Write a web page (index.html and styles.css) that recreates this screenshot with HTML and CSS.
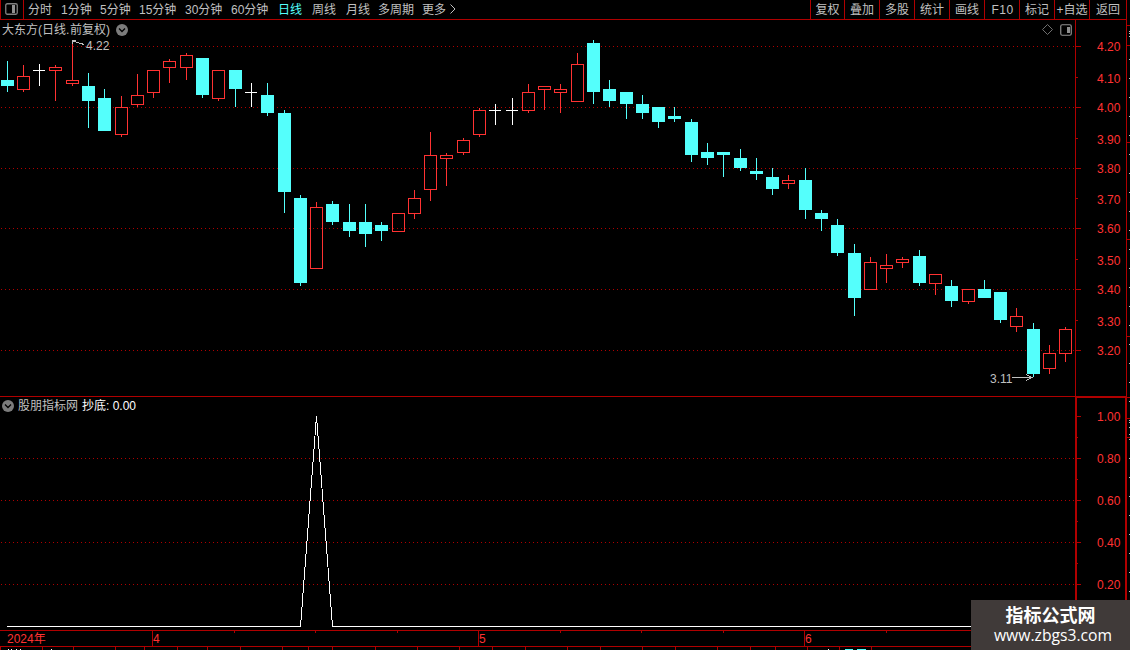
FILE: index.html
```html
<!DOCTYPE html>
<html lang="zh-CN">
  <head>
    <meta charset="UTF-8" />
    <meta name="viewport" content="width=device-width, initial-scale=1.0" />
    <title>大东方 日线</title>
    <link rel="stylesheet" href="styles.css">
  </head>
  <body>
    <nav id="toolbar">
      <div class="layout-btn">
        <svg width="13" height="12" viewBox="0 0 13 12">
          <rect x="0.75" y="0.75" width="11.5" height="10.5" rx="1.5" fill="none" stroke="#808080" stroke-width="1.3" />
          <rect x="7" y="2" width="3" height="8" fill="#909090" />
        </svg>
      </div>
      <div class="periods">
        <span>分时</span>
        <span>1分钟</span>
        <span>5分钟</span>
        <span>15分钟</span>
        <span>30分钟</span>
        <span>60分钟</span>
        <span class="active">日线</span>
        <span>周线</span>
        <span>月线</span>
        <span>多周期</span>
        <span>更多</span>
        <svg width="6" height="10" viewBox="0 0 6 10">
          <path d="M0.5 0.5 L5 5 L0.5 9.5" fill="none" stroke="#c0c0c0" />
        </svg>
      </div>
      <div class="tools">
        <span>复权</span>
        <span>叠加</span>
        <span>多股</span>
        <span>统计</span>
        <span>画线</span>
        <span class="wide">F10</span>
        <span>标记</span>
        <span>+自选</span>
        <span>返回</span>
      </div>
    </nav>

    <main>
      <div class="charts">
        <section class="panel price">
          <svg id="price" width="1127" height="376" viewBox="0 20 1127 376" shape-rendering="crispEdges"></svg>
          <header>
            <span>大东方<i>(</i>日线<i>.</i>前复权<i>)</i></span>
            <svg width="12" height="12" viewBox="0 0 12 12">
              <circle cx="6" cy="6" r="6" fill="#7c7c7c" />
              <path d="M3 4.5 L6 7.5 L9 4.5" fill="none" stroke="#000" stroke-width="1.3" />
            </svg>
          </header>
          <div class="corner">
            <svg width="11" height="11" viewBox="0 0 11 11">
              <path d="M5.5 0.5 L10.5 5.5 L5.5 10.5 L0.5 5.5 Z" fill="none" stroke="#707070" />
            </svg>
            <svg width="12" height="12" viewBox="0 0 12 12">
              <rect x="0.75" y="0.75" width="10.5" height="10.5" rx="1.5" fill="none" stroke="#909090" stroke-width="1.2" />
              <rect x="7" y="3" width="3" height="6" fill="#909090" />
            </svg>
          </div>
        </section>

        <section class="panel signal">
          <svg id="signal" width="1127" height="234" viewBox="0 396 1127 234" shape-rendering="crispEdges"></svg>
          <header>
            <svg width="12" height="12" viewBox="0 0 12 12">
              <circle cx="6" cy="6" r="6" fill="#7c7c7c" />
              <path d="M3 4.5 L6 7.5 L9 4.5" fill="none" stroke="#000" stroke-width="1.3" />
            </svg>
            <span>股朋指标网</span>
            <span class="value">抄底: 0.00</span>
          </header>
        </section>

        <svg id="timeline" width="1127" height="20" viewBox="0 630 1127 20" shape-rendering="crispEdges"></svg>
      </div>
      <svg id="strip" width="3" height="630" viewBox="1127 20 3 630" shape-rendering="crispEdges"></svg>
    </main>

    <div class="watermark">
      <strong>指标公式网</strong>
      <span>www.zbgs3.com</span>
    </div>

    <script src="chart.js"></script>
  </body>
</html>
```
FILE: styles.css
```css
* {
  margin: 0;
  padding: 0;
  box-sizing: border-box;
}

body {
  width: 1130px;
  height: 650px;
  overflow: hidden;
  position: relative;
  background: #000;
  color: #c0c0c0;
  font-family: "Liberation Sans", "Noto Sans CJK SC", sans-serif;
  font-size: 12px;
  line-height: 18px;
}

svg {
  display: block;
}

#toolbar {
  display: flex;
  height: 20px;
  width: 1127px;
  border-bottom: 1px solid #b00000;
  border-right: 1px solid #b00000;
  line-height: 20px;
  white-space: nowrap;
}

.layout-btn {
  width: 24px;
  padding: 3px 0 0 4px;
  border-left: 1px solid #b00000;
  border-right: 1px solid #b00000;
}

.periods {
  flex: 1;
  display: grid;
  grid-template-columns: 33px 39px 39px 46px 46px 47px 34px 34px 32px 44px 28px 8px;
  padding-left: 4px;
}

.periods svg {
  margin-top: 4px;
}

.active {
  color: #54fffc;
}

.tools {
  display: grid;
  grid-template-columns: 34px repeat(7, 35px) 37px;
}

.tools span {
  border-left: 1px solid #b00000;
  text-align: center;
}

.tools .wide {
  letter-spacing: 0.5px;
  padding-left: 1px;
}

main {
  display: flex;
}

.panel {
  position: relative;
}

.panel header {
  position: absolute;
  top: 0;
  left: 2px;
  display: flex;
  align-items: center;
  gap: 6px;
}

.panel header span {
  padding-top: 1px;
}

.panel header i {
  display: inline-block;
  width: 4px;
  font-style: normal;
}

.panel.signal header {
  gap: 4px;
}

.value {
  color: #fff;
}

.corner {
  position: absolute;
  top: 4px;
  left: 1042px;
  display: flex;
  gap: 7px;
}

/* axis and candle drawing */
.rule {
  fill: #b00000;
}

.dots {
  stroke: #b00000;
  stroke-dasharray: 1 3;
}

.up {
  fill: #ff3232;
}

.down {
  fill: #54fffc;
}

.flat {
  fill: #fff;
}

.hollow {
  fill: none;
  stroke: #ff3232;
}

.axis-text {
  fill: #ff3232;
  font-size: 12px;
}

.note {
  fill: #c0c0c0;
  font-size: 12px;
}

.arrow {
  fill: none;
  stroke: #c0c0c0;
}

.line {
  fill: none;
  stroke: #fff;
}

.watermark {
  position: absolute;
  right: 0;
  bottom: 0;
  width: 159px;
  height: 50px;
  padding-top: 6px;
  display: flex;
  flex-direction: column;
  align-items: center;
  background: #403a39;
  color: #fff;
}

.watermark strong {
  font: bold 18px/20px "Liberation Sans", "Noto Sans CJK SC", sans-serif;
}

.watermark span {
  font: 15.7px/19px "Open Sans", sans-serif;
  margin-left: 5px;
}
```
FILE: chart.js
```js
// x, high, body top, body bottom, low, kind (u = up, d = down, f = flat)
const candles = [
  [7, 61, 80, 86, 92, "d"],
  [23, 65, 76, 90, 92, "u"],
  [39, 64, 70, 71, 86, "f"],
  [55, 65, 67, 71, 101, "u"],
  [72, 43, 80, 84, 86, "u"],
  [88, 73, 86, 101, 128, "d"],
  [104, 89, 98, 131, 131, "d"],
  [121, 96, 107, 135, 137, "u"],
  [137, 74, 95, 105, 107, "u"],
  [153, 70, 70, 93, 98, "u"],
  [169, 59, 61, 68, 83, "u"],
  [186, 53, 55, 68, 80, "u"],
  [202, 58, 58, 95, 98, "d"],
  [218, 70, 70, 99, 101, "u"],
  [235, 70, 70, 89, 107, "d"],
  [251, 83, 92, 93, 107, "f"],
  [267, 83, 95, 113, 116, "d"],
  [284, 110, 113, 192, 213, "d"],
  [300, 195, 198, 283, 286, "d"],
  [316, 202, 207, 269, 269, "u"],
  [332, 201, 204, 222, 225, "d"],
  [349, 204, 222, 231, 237, "d"],
  [365, 204, 222, 234, 247, "d"],
  [381, 222, 225, 231, 241, "d"],
  [398, 213, 213, 232, 232, "u"],
  [414, 190, 198, 214, 219, "u"],
  [430, 132, 155, 190, 201, "u"],
  [446, 153, 155, 159, 186, "u"],
  [463, 138, 140, 153, 155, "u"],
  [479, 108, 110, 135, 137, "u"],
  [495, 104, 110, 111, 125, "f"],
  [512, 98, 110, 111, 125, "f"],
  [528, 84, 92, 111, 113, "u"],
  [544, 86, 86, 90, 110, "u"],
  [560, 84, 89, 93, 113, "u"],
  [577, 53, 64, 102, 102, "u"],
  [593, 40, 43, 92, 104, "d"],
  [609, 80, 89, 101, 107, "d"],
  [626, 92, 92, 104, 119, "d"],
  [642, 95, 104, 113, 119, "d"],
  [658, 107, 107, 122, 128, "d"],
  [674, 107, 116, 119, 122, "d"],
  [691, 119, 122, 155, 162, "d"],
  [707, 143, 152, 158, 165, "d"],
  [723, 152, 152, 155, 177, "d"],
  [740, 149, 158, 168, 171, "d"],
  [756, 158, 171, 174, 180, "d"],
  [772, 168, 177, 189, 195, "d"],
  [788, 175, 180, 184, 189, "u"],
  [805, 168, 180, 210, 219, "d"],
  [821, 210, 213, 219, 231, "d"],
  [837, 219, 225, 253, 256, "d"],
  [854, 244, 253, 298, 316, "d"],
  [870, 257, 262, 290, 290, "u"],
  [886, 254, 265, 269, 283, "u"],
  [902, 257, 259, 263, 268, "u"],
  [919, 250, 256, 283, 286, "d"],
  [935, 274, 274, 284, 295, "u"],
  [951, 280, 286, 301, 307, "d"],
  [968, 289, 289, 302, 304, "u"],
  [984, 280, 289, 298, 298, "d"],
  [1000, 292, 292, 320, 323, "d"],
  [1016, 308, 316, 327, 332, "u"],
  [1033, 323, 329, 374, 377, "d"],
  [1049, 345, 353, 369, 374, "u"],
  [1065, 327, 329, 354, 362, "u"],
];

const classes = { u: "up", d: "down", f: "flat" };

const rect = (x, y, w, h, cls) =>
  `<rect x="${x}" y="${y}" width="${w}" height="${h}" class="${cls}"/>`;
const text = (x, y, str, cls) =>
  `<text x="${x}" y="${y}" class="${cls}">${str}</text>`;
const dots = (y) =>
  `<line x1="1" y1="${y + 0.5}" x2="1075" y2="${y + 0.5}" class="dots"/>`;

function drawCandle([x, high, top, bottom, low, kind]) {
  const cls = classes[kind];
  let out = "";
  if (top > high) out += rect(x, high, 1, top - high, cls);
  if (low > bottom) out += rect(x, bottom, 1, low - bottom, cls);
  if (kind === "u") {
    out += `<rect x="${x - 5.5}" y="${top + 0.5}" width="12" height="${bottom - top - 1}" class="hollow"/>`;
  } else if (kind === "f") {
    out += rect(x - 6, top, 12, 1, cls);
  } else {
    out += rect(x - 6, top, 13, bottom - top, cls);
  }
  return out;
}

function drawPrice() {
  let out = "";
  const labels = [
    ["4.20", 46, 46], ["4.10", 77, 78], ["4.00", 107, 107], ["3.90", 138, 139],
    ["3.80", 168, 168], ["3.70", 198, 199], ["3.60", 228, 228], ["3.50", 259, 260],
    ["3.40", 289, 289], ["3.30", 320, 321], ["3.20", 350, 350],
  ];
  labels.forEach(([label, y, ty], i) => {
    const major = i % 2 === 0;
    if (major) out += dots(y);
    out += rect(1076, y, major ? 5 : 2, 1, "rule");
    out += text(1097, ty + 5, label, "axis-text");
  });
  out += rect(1075, 20, 1, 376, "rule") + rect(1126, 20, 1, 376, "rule");
  out += candles.map(drawCandle).join("");

  out += text(86, 50, "4.22", "note");
  out += `<path d="M84 44.5 L73 41 M72.5 44 V40.5 M72 40.5 H76" class="arrow"/>`;
  out += text(990, 383, "3.11", "note");
  out += `<path d="M1012 377.5 H1032 M1026 374.5 L1032 377.5 L1026 380.5" class="arrow"/>`;
  document.getElementById("price").innerHTML = out;
}

function drawSignal() {
  let out = rect(0, 396, 1127, 1, "rule") + rect(1075, 397, 52, 1, "rule");
  out += rect(1075, 396, 2, 234, "rule") + rect(1125, 396, 2, 234, "rule");
  ["1.00", "0.80", "0.60", "0.40", "0.20"].forEach((label, i) => {
    const y = 416 + i * 42;
    if (i > 0) out += dots(y);
    out += rect(1077, y, 4, 1, "rule") + rect(1077, y + 21, 1, 1, "rule");
    out += text(1097, y + 5, label, "axis-text");
  });
  out += `<polyline points="7,626.5 300.5,626.5 316.5,416 332.5,626.5 1075,626.5" class="line"/>`;
  document.getElementById("signal").innerHTML = out;
}

function drawTimeline() {
  let out = rect(0, 630, 1127, 1, "rule") + rect(0, 646, 1127, 1, "rule");
  [152, 478, 804].forEach((x) => (out += rect(x, 631, 1, 15, "rule")));
  [234, 315, 397, 560, 641, 723, 886].forEach((x) => (out += rect(x, 631, 1, 2, "rule")));
  out += text(7, 643, "2024年", "axis-text");
  out += text(153, 643, "4", "axis-text");
  out += text(479, 643, "5", "axis-text");
  out += text(805, 643, "6", "axis-text");

  // top edge of the tab row that runs off the window
  [0, 42, 73, 115, 144, 177, 207, 240, 282, 308, 332, 375, 417, 459, 492, 525,
    567, 600, 642, 675, 717, 750, 775, 807, 839, 871].forEach((x) => (out += rect(x, 647, 1, 3, "rule")));
  [8, 11, 16, 20, 51, 828].forEach((x) => (out += rect(x, 649, 1, 1, "flat")));
  out += rect(845, 649, 8, 1, "down") + rect(857, 649, 9, 1, "down");
  document.getElementById("timeline").innerHTML = out;
}

function drawStrip() {
  let out = "";
  [25, 45, 142, 239, 336, 397, 418, 437].forEach((y) => (out += rect(1127, y, 3, 1, "rule")));
  [31, 33, 36, 422, 427, 434].forEach((y) => (out += rect(1129, y, 1, 1, "note")));
  for (let y = 59; y < 600; y += 19) {
    out += rect(1129, y, 1, 1, "note");
  }
  document.getElementById("strip").innerHTML = out;
}

drawPrice();
drawSignal();
drawTimeline();
drawStrip();
```
